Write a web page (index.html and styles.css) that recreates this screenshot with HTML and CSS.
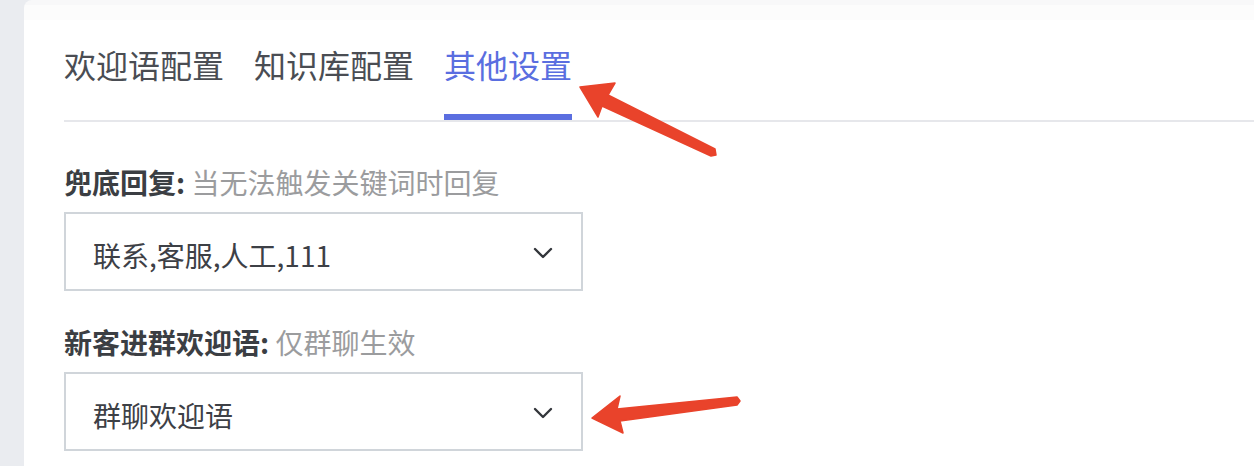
FILE: index.html
```html
<!DOCTYPE html>
<html lang="zh-CN">
<head>
<meta charset="utf-8">
<title>其他设置</title>
<link rel="stylesheet" href="styles.css">
</head>
<body>
<div class="page">
  <div class="card">
    <div class="tabs">
      <div class="tab">欢迎语配置</div>
      <div class="tab">知识库配置</div>
      <div class="tab active">其他设置</div>
    </div>
    <div class="form">
      <div class="item">
        <div class="label"><b>兜底回复:</b> <span class="hint">当无法触发关键词时回复</span></div>
        <div class="select">
          <span class="value">联系,客服,人工,111</span>
          <svg class="chev" width="20" height="12" viewBox="0 0 20 12"><polyline points="2,2 10,10 18,2" fill="none" stroke="#33363b" stroke-width="2.4" stroke-linecap="round" stroke-linejoin="round"/></svg>
        </div>
      </div>
      <div class="item">
        <div class="label"><b>新客进群欢迎语:</b> <span class="hint">仅群聊生效</span></div>
        <div class="select">
          <span class="value">群聊欢迎语</span>
          <svg class="chev" width="20" height="12" viewBox="0 0 20 12"><polyline points="2,2 10,10 18,2" fill="none" stroke="#33363b" stroke-width="2.4" stroke-linecap="round" stroke-linejoin="round"/></svg>
        </div>
      </div>
    </div>
  </div>
  <svg class="annot" width="1254" height="466" viewBox="0 0 1254 466">
    <polygon points="580,87 615,83 608,95 715,149 716,155 711,156 602,106 598,117" fill="#e9432b" stroke="#e9432b" stroke-width="1.5" stroke-linejoin="round"/>
    <polygon points="592,418 620,396 617,409 737,397 740,401 737,405 620,421 623,433" fill="#e9432b" stroke="#e9432b" stroke-width="1.5" stroke-linejoin="round"/>
  </svg>
</div>
</body>
</html>
```
FILE: styles.css
```css
* { box-sizing: border-box; }
html, body { margin: 0; padding: 0; }
body {
  font-family: "Noto Sans CJK SC", "Noto Sans", sans-serif;
  background: #eaecf0;
}
.page {
  position: relative;
  width: 1254px;
  height: 466px;
  overflow: hidden;
  padding-left: 24px;
}
.card {
  height: 100%;
  background: linear-gradient(#f8f8f9 0, #f8f8f9 5px, #fcfcfc 5px, #fcfcfc 20px, #ffffff 20px);
  border-radius: 8px 0 0 0;
  padding-left: 40px;
}
.tabs {
  display: flex;
  gap: 30px;
  padding-top: 42px;
  border-bottom: 2px solid #e6e7eb;
}
.tab {
  font-size: 32px;
  line-height: 44px;
  color: #4a4d53;
  padding-bottom: 28px;
  border-bottom: 6px solid transparent;
}
.tab.active {
  color: #5a6ee0;
  border-bottom-color: #5b6ee0;
}
.form {
  padding-top: 42px;
}
.item {
  margin-bottom: 33px;
}
.label {
  font-size: 28px;
  line-height: 36px;
  margin-bottom: 12px;
  color: #3b3e43;
}
.label b {
  font-weight: 700;
}
.hint {
  color: #9b9c9e;
}
.select {
  width: 519px;
  height: 79px;
  border: 2px solid #d0d5da;
  display: flex;
  align-items: center;
  justify-content: space-between;
  padding: 0 28px 0 27px;
}
.value {
  font-size: 28px;
  color: #3d4046;
  line-height: 36px;
  padding-top: 6px;
}
.chev {
  display: block;
  margin-top: 2px;
}
.annot {
  position: absolute;
  left: 0;
  top: 0;
  pointer-events: none;
}
```
